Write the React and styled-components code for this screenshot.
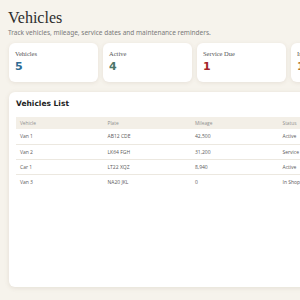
import React from 'react';
import styled, { createGlobalStyle } from 'styled-components';

const GlobalStyle = createGlobalStyle`
    html, body {
        margin: 0;
        padding: 0;
        overflow: hidden;
        background: #f6f3ec;
    }
`;

const STATS = [
    { label: 'Vehicles', value: 5, color: '#2f6b93' },
    { label: 'Active', value: 4, color: '#4d7769' },
    { label: 'Service Due', value: 1, color: '#a32429' },
    { label: 'In Shop', value: 1, color: '#b0702a' },
];

const VEHICLES = [
    { name: 'Van 1', plate: 'AB12 CDE', mileage: '42,500', status: 'Active' },
    { name: 'Van 2', plate: 'LK64 FGH', mileage: '31,200', status: 'Service Due' },
    { name: 'Car 1', plate: 'LT22 XQZ', mileage: '8,940', status: 'Active' },
    { name: 'Van 3', plate: 'NA20 JKL', mileage: '0', status: 'In Shop' },
];

function App() {
    return (
        <Page>
            <GlobalStyle />
            <Title>Vehicles</Title>
            <Subtitle>Track vehicles, mileage, service dates and maintenance reminders.</Subtitle>
            <StatGrid>
                {STATS.map((s) => (
                    <StatCard key={s.label}>
                        <StatLabel>{s.label}</StatLabel>
                        <StatValue color={s.color}>{s.value}</StatValue>
                    </StatCard>
                ))}
            </StatGrid>
            <Panel>
                <PanelTitle>Vehicles List</PanelTitle>
                <Table>
                    <thead>
                        <tr>
                            <Th>Vehicle</Th>
                            <Th>Plate</Th>
                            <Th>Mileage</Th>
                            <Th>Status</Th>
                        </tr>
                    </thead>
                    <tbody>
                        {VEHICLES.map((v) => (
                            <Row key={v.name}>
                                <Td>{v.name}</Td>
                                <Td>{v.plate}</Td>
                                <Td>{v.mileage}</Td>
                                <Td>{v.status}</Td>
                            </Row>
                        ))}
                    </tbody>
                </Table>
            </Panel>
        </Page>
    );
}

const Page = styled.main`
    width: 371px;
    padding: 10px 0 12px 9px;
`;

const Title = styled.h1`
    margin: 0 0 0 -1px;
    font-family: 'Liberation Serif', serif;
    font-weight: normal;
    font-size: 16px;
    line-height: 16px;
    color: #2d2d2d;
`;

const Subtitle = styled.p`
    margin: 2px 0 0 -1px;
    font-family: 'Noto Sans', sans-serif;
    font-size: 6.5px;
    line-height: 9px;
    color: #7a7a7a;
`;

const StatGrid = styled.div`
    display: grid;
    grid-template-columns: repeat(4, 89px);
    gap: 5px;
    margin-top: 6px;
`;

const StatCard = styled.div`
    height: 39px;
    box-sizing: border-box;
    padding: 7px 6px;
    background: #fff;
    border-radius: 6px;
    box-shadow: 0 1px 4px rgba(120, 100, 70, 0.12);
`;

const StatLabel = styled.div`
    font-family: 'Liberation Serif', serif;
    font-size: 6.5px;
    line-height: 8px;
    color: #555;
`;

const StatValue = styled.div`
    margin-top: 2px;
    font-family: 'DejaVu Sans', sans-serif;
    font-weight: bold;
    font-size: 11px;
    line-height: 13px;
    color: ${(p) => p.color};
`;

const Panel = styled.section`
    margin-top: 10px;
    height: 195px;
    box-sizing: border-box;
    padding: 7px 7px;
    background: #fff;
    border-radius: 6px;
    box-shadow: 0 1px 5px rgba(120, 100, 70, 0.14);
`;

const PanelTitle = styled.h2`
    margin: 0;
    font-family: 'DejaVu Sans', sans-serif;
    font-weight: bold;
    font-size: 7.5px;
    line-height: 10px;
    color: #222;
`;

const Table = styled.table`
    margin-top: 8px;
    width: 350px;
    border-collapse: collapse;
    table-layout: fixed;
    font-family: 'Open Sans', sans-serif;
`;

const Th = styled.th`
    height: 12px;
    padding: 0 4px;
    background: #f3efe7;
    text-align: left;
    font-weight: normal;
    font-size: 4.8px;
    color: #8f8f8f;
`;

const Row = styled.tr`
    & + & td {
        border-top: 1px solid #ece8e0;
    }
`;

const Td = styled.td`
    height: 15px;
    padding: 0 4px;
    box-sizing: border-box;
    font-size: 5px;
    color: #5a5a5a;
`;

export default App;
